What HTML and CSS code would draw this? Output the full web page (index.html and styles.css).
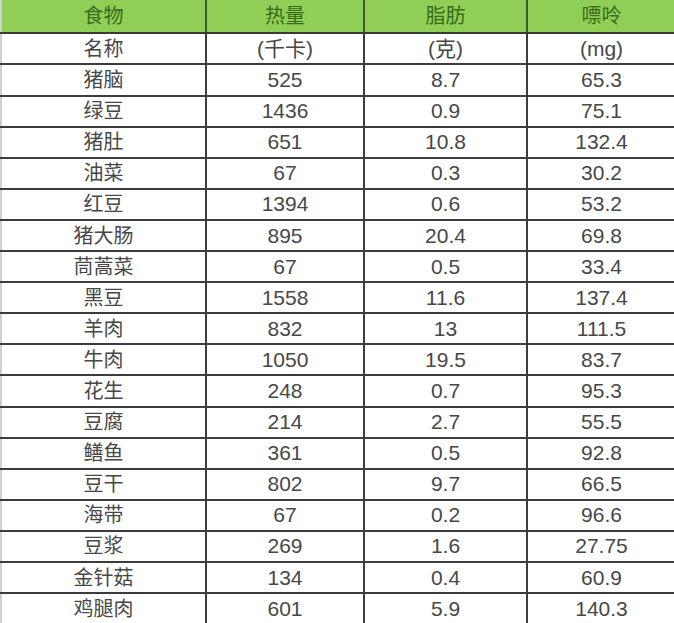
FILE: index.html
```html
<!DOCTYPE html>
<html lang="zh-CN">
<head>
<meta charset="utf-8">
<title>食物嘌呤表</title>
<link rel="stylesheet" href="styles.css">
</head>
<body>
<table class="food-table">
  <colgroup>
    <col class="c1"><col class="c2"><col class="c3"><col class="c4">
  </colgroup>
  <thead>
    <tr class="head"><th>食物</th><th>热量</th><th>脂肪</th><th>嘌呤</th></tr>
  </thead>
  <tbody>
    <tr><td>名称</td><td>(千卡)</td><td>(克)</td><td>(mg)</td></tr>
    <tr><td>猪脑</td><td>525</td><td>8.7</td><td>65.3</td></tr>
    <tr><td>绿豆</td><td>1436</td><td>0.9</td><td>75.1</td></tr>
    <tr><td>猪肚</td><td>651</td><td>10.8</td><td>132.4</td></tr>
    <tr><td>油菜</td><td>67</td><td>0.3</td><td>30.2</td></tr>
    <tr><td>红豆</td><td>1394</td><td>0.6</td><td>53.2</td></tr>
    <tr><td>猪大肠</td><td>895</td><td>20.4</td><td>69.8</td></tr>
    <tr><td>茼蒿菜</td><td>67</td><td>0.5</td><td>33.4</td></tr>
    <tr><td>黑豆</td><td>1558</td><td>11.6</td><td>137.4</td></tr>
    <tr><td>羊肉</td><td>832</td><td>13</td><td>111.5</td></tr>
    <tr><td>牛肉</td><td>1050</td><td>19.5</td><td>83.7</td></tr>
    <tr><td>花生</td><td>248</td><td>0.7</td><td>95.3</td></tr>
    <tr><td>豆腐</td><td>214</td><td>2.7</td><td>55.5</td></tr>
    <tr><td>鳝鱼</td><td>361</td><td>0.5</td><td>92.8</td></tr>
    <tr><td>豆干</td><td>802</td><td>9.7</td><td>66.5</td></tr>
    <tr><td>海带</td><td>67</td><td>0.2</td><td>96.6</td></tr>
    <tr><td>豆浆</td><td>269</td><td>1.6</td><td>27.75</td></tr>
    <tr><td>金针菇</td><td>134</td><td>0.4</td><td>60.9</td></tr>
    <tr><td>鸡腿肉</td><td>601</td><td>5.9</td><td>140.3</td></tr>
  </tbody>
</table>
</body>
</html>
```
FILE: styles.css
```css
html, body {
  margin: 0;
  padding: 0;
  background: #ffffff;
  overflow: hidden;
}
.food-table {
  width: 674px;
  table-layout: fixed;
  border-collapse: collapse;
  font-family: "Liberation Sans", "Noto Sans CJK SC", sans-serif;
  color: #474747;
  font-size: 21px;
}
.c1 { width: 205px; }
.c2 { width: 158px; }
.c3 { width: 163px; }
.c4 { width: 148px; }
.food-table th,
.food-table td {
  padding: 0;
  text-align: center;
  vertical-align: middle;
  border-left: 2px solid #3c3c3c;
  border-bottom: 2px solid #3c3c3c;
  line-height: 24px;
  white-space: nowrap;
}
.food-table th:first-child,
.food-table td:first-child {
  border-left: 2px solid #d0d0d0;
}
.head th {
  height: 32.4px;
  background: #8fcf56;
  color: #386b1c;
  font-weight: normal;
  font-size: 20px;
  border-left-color: #3f5a30;
  border-bottom-color: #3a3a3a;
}
.food-table td {
  height: 29.1px;
}
.food-table td:first-child {
  font-size: 20px;
}
```
